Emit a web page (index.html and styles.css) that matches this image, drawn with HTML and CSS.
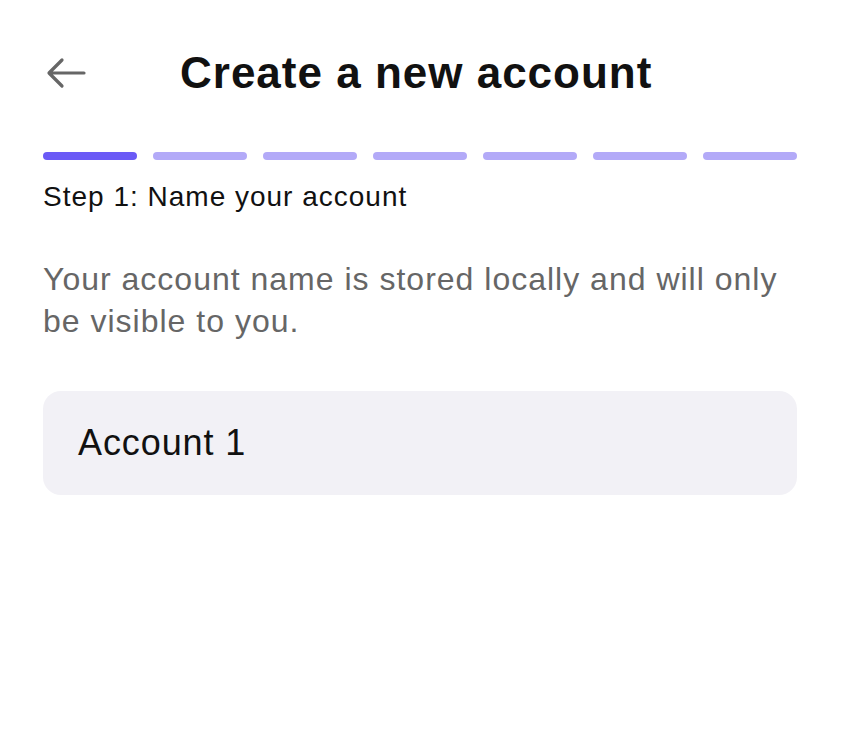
FILE: index.html
```html
<!DOCTYPE html>
<html>
<head>
<meta charset="utf-8">
<link rel="stylesheet" href="styles.css">
</head>
<body>
<div class="page">
  <header class="header">
    <button class="back" aria-label="Back">
      <svg width="44" height="40" viewBox="0 0 44 40" fill="none" stroke="#666" stroke-width="3.2" stroke-linecap="round" stroke-linejoin="round">
        <path d="M41 20H6.5M19 7L6 20l13 13"/>
      </svg>
    </button>
    <h1 class="title">Create a new account</h1>
  </header>
  <div class="steps">
    <span class="seg active"></span>
    <span class="seg"></span>
    <span class="seg"></span>
    <span class="seg"></span>
    <span class="seg"></span>
    <span class="seg"></span>
    <span class="seg"></span>
  </div>
  <p class="step-label">Step 1: Name your account</p>
  <p class="desc">Your account name is stored locally and will only be visible to you.</p>
  <div class="field">Account 1</div>
</div>
</body>
</html>
```
FILE: styles.css
```css
* { box-sizing: border-box; }
html, body { margin: 0; padding: 0; background: #fff; }
body { font-family: "Liberation Sans", Arial, sans-serif; color: #111; }
.page { padding: 44px 47px 0 43px; }
.header { display: flex; align-items: center; height: 58px; }
.back { width: 44px; height: 40px; padding: 0; margin: 0; border: 0; background: none; display: flex; align-items: center; justify-content: center; }
.title { margin: 0 0 0 93px; font-size: 44px; font-weight: 700; letter-spacing: 1px; color: #111; }
.steps { display: flex; gap: 16px; margin-top: 50px; }
.seg { flex: 1; height: 8px; border-radius: 4px; background: #b3aaf8; }
.seg.active { background: #6b5af6; }
.step-label { margin: 20px 0 0; font-size: 28px; line-height: 34px; letter-spacing: 1px; color: #111; }
.desc { margin: 44px 0 0; font-size: 32px; line-height: 42px; letter-spacing: 1px; color: #666; }
.field { margin-top: 49px; height: 104px; border-radius: 18px; background: #f2f1f6; display: flex; align-items: center; padding-left: 35px; font-size: 36px; color: #111; letter-spacing: 0.9px; }
```
